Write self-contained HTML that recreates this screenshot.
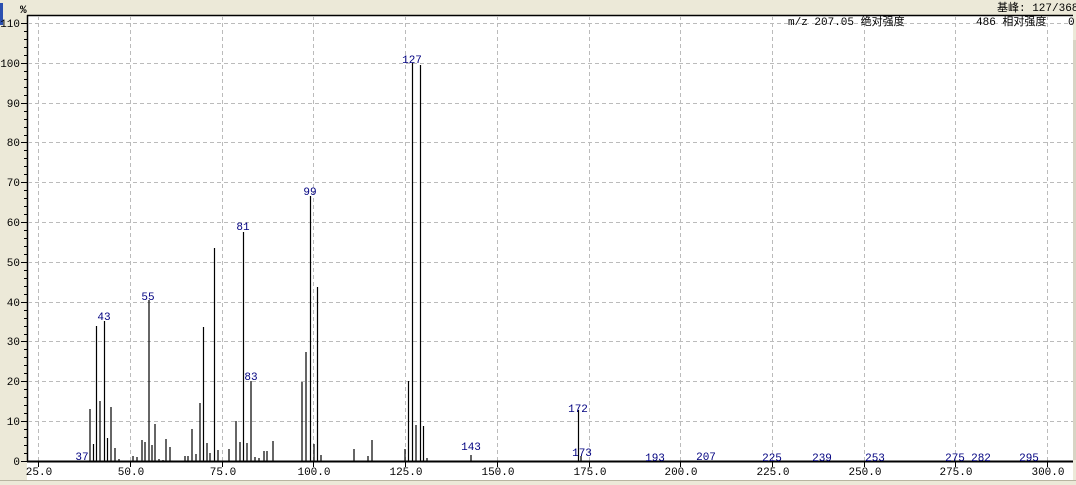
<!DOCTYPE html>
<html><head><meta charset="utf-8"><style>
html,body{margin:0;padding:0;background:#ece9d8;width:1076px;height:485px;overflow:hidden}
svg{display:block}
text{font-family:"Liberation Mono","Noto Sans CJK SC",monospace;font-size:11px}
</style></head><body>
<svg width="1076" height="485" xmlns="http://www.w3.org/2000/svg">
<rect x="0" y="0" width="1076" height="485" fill="#ece9d8"/>
<rect x="0" y="3" width="3" height="22" fill="#2a4fb0"/>
<rect x="27" y="15" width="1046" height="465" fill="#fff"/>
<line x1="0" y1="480.5" x2="1076" y2="480.5" stroke="#b8b4a0"/>
<line x1="27" y1="15.5" x2="1073" y2="15.5" stroke="#000" stroke-width="1.5"/>
<line x1="27.5" y1="15" x2="27.5" y2="462" stroke="#000" stroke-width="1.5"/>
<rect x="1073" y="40" width="3" height="420" fill="#d8d4c4"/>
<g stroke="#bbb" stroke-dasharray="4,3">
<line x1="38.5" y1="16" x2="38.5" y2="461"/><line x1="130.5" y1="16" x2="130.5" y2="461"/><line x1="222.5" y1="16" x2="222.5" y2="461"/><line x1="313.5" y1="16" x2="313.5" y2="461"/><line x1="405.5" y1="16" x2="405.5" y2="461"/><line x1="497.5" y1="16" x2="497.5" y2="461"/><line x1="589.5" y1="16" x2="589.5" y2="461"/><line x1="680.5" y1="16" x2="680.5" y2="461"/><line x1="772.5" y1="16" x2="772.5" y2="461"/><line x1="864.5" y1="16" x2="864.5" y2="461"/><line x1="955.5" y1="16" x2="955.5" y2="461"/><line x1="1047.5" y1="16" x2="1047.5" y2="461"/>
<line x1="28" y1="23.5" x2="1073" y2="23.5"/><line x1="28" y1="63.5" x2="1073" y2="63.5"/><line x1="28" y1="103.5" x2="1073" y2="103.5"/><line x1="28" y1="142.5" x2="1073" y2="142.5"/><line x1="28" y1="182.5" x2="1073" y2="182.5"/><line x1="28" y1="222.5" x2="1073" y2="222.5"/><line x1="28" y1="262.5" x2="1073" y2="262.5"/><line x1="28" y1="302.5" x2="1073" y2="302.5"/><line x1="28" y1="341.5" x2="1073" y2="341.5"/><line x1="28" y1="381.5" x2="1073" y2="381.5"/><line x1="28" y1="421.5" x2="1073" y2="421.5"/>
</g>
<line x1="27" y1="461.5" x2="1073" y2="461.5" stroke="#000" stroke-width="2"/>
<g stroke="#000">
<path d="M21 23.5h6M21 63.5h6M21 103.5h6M21 142.5h6M21 182.5h6M21 222.5h6M21 262.5h6M21 302.5h6M21 341.5h6M21 381.5h6M21 421.5h6M21 461.5h6"/>
<path d="M24 31.5h3M24 39.5h3M24 47.5h3M24 55.5h3M24 71.5h3M24 79.5h3M24 87.5h3M24 95.5h3M24 111.5h3M24 119.5h3M24 127.5h3M24 135.5h3M24 150.5h3M24 158.5h3M24 166.5h3M24 174.5h3M24 190.5h3M24 198.5h3M24 206.5h3M24 214.5h3M24 230.5h3M24 238.5h3M24 246.5h3M24 254.5h3M24 270.5h3M24 278.5h3M24 286.5h3M24 294.5h3M24 310.5h3M24 318.5h3M24 326.5h3M24 334.5h3M24 349.5h3M24 357.5h3M24 365.5h3M24 373.5h3M24 389.5h3M24 397.5h3M24 405.5h3M24 413.5h3M24 429.5h3M24 437.5h3M24 445.5h3M24 453.5h3"/>
<path d="M38.5 462v5M130.5 462v5M222.5 462v5M313.5 462v5M405.5 462v5M497.5 462v5M589.5 462v5M680.5 462v5M772.5 462v5M864.5 462v5M955.5 462v5M1047.5 462v5"/>
</g>
<g fill="#000">
<text x="20" y="27" text-anchor="end">110</text><text x="20" y="67" text-anchor="end">100</text><text x="20" y="107" text-anchor="end">90</text><text x="20" y="146" text-anchor="end">80</text><text x="20" y="186" text-anchor="end">70</text><text x="20" y="226" text-anchor="end">60</text><text x="20" y="266" text-anchor="end">50</text><text x="20" y="306" text-anchor="end">40</text><text x="20" y="345" text-anchor="end">30</text><text x="20" y="385" text-anchor="end">20</text><text x="20" y="425" text-anchor="end">10</text><text x="20" y="465" text-anchor="end">0</text>
<g text-anchor="middle"><text x="39" y="475">25.0</text><text x="131" y="475">50.0</text><text x="223" y="475">75.0</text><text x="314" y="475">100.0</text><text x="406" y="475">125.0</text><text x="498" y="475">150.0</text><text x="590" y="475">175.0</text><text x="681" y="475">200.0</text><text x="773" y="475">225.0</text><text x="865" y="475">250.0</text><text x="956" y="475">275.0</text><text x="1048" y="475">300.0</text></g>
<text x="20" y="13" font-weight="bold" font-size="9">%</text>
<text x="997" y="11">基峰: 127/368,</text>
<text x="788" y="25">m/z  207.05  绝对强度</text>
<text x="976" y="25">486  相对强度</text>
<text x="1068" y="25">0</text>
</g>
<path stroke="#000" stroke-width="1.2" fill="none" d="M90 461V409M93.5 461V444M96.5 461V326M100 461V401M104.5 461V321M107.5 461V438M111 461V407M115 461V448M119 461V459M133 461V456M137 461V457M142 461V440M145 461V442M149 461V300M152 461V445M155 461V424M159 461V459M163 461V460M166 461V439M170 461V447M185 461V456M188 461V456M192 461V429M196 461V454M200 461V403M203.5 461V327M207 461V443M210 461V453M214.5 461V248M218 461V450M229 461V449M236 461V421M240 461V442M243.5 461V232M247 461V443M251 461V381M255 461V457M259 461V458M264 461V451M267 461V451M273 461V441M302 461V382M306 461V352M310.5 461V196M314 461V444M317.5 461V287M321 461V455M354 461V449M368 461V456M372 461V440M405 461V449M408.5 461V381M412.5 461V63M416 461V425M420.5 461V65M423.5 461V426M427 461V458M471 461V455M578.5 461V410M581 461V456"/>
<g fill="#000080" text-anchor="middle">
<text x="82" y="460">37</text><text x="104" y="320">43</text><text x="148" y="300">55</text><text x="243" y="230">81</text><text x="251" y="380">83</text><text x="310" y="195">99</text><text x="412" y="63">127</text><text x="471" y="450">143</text><text x="578" y="412">172</text><text x="582" y="456">173</text><text x="655" y="461">193</text><text x="706" y="460">207</text><text x="772" y="461">225</text><text x="822" y="461">239</text><text x="875" y="461">253</text><text x="955" y="461">275</text><text x="981" y="461">282</text><text x="1029" y="461">295</text>
</g>
</svg>
</body></html>
